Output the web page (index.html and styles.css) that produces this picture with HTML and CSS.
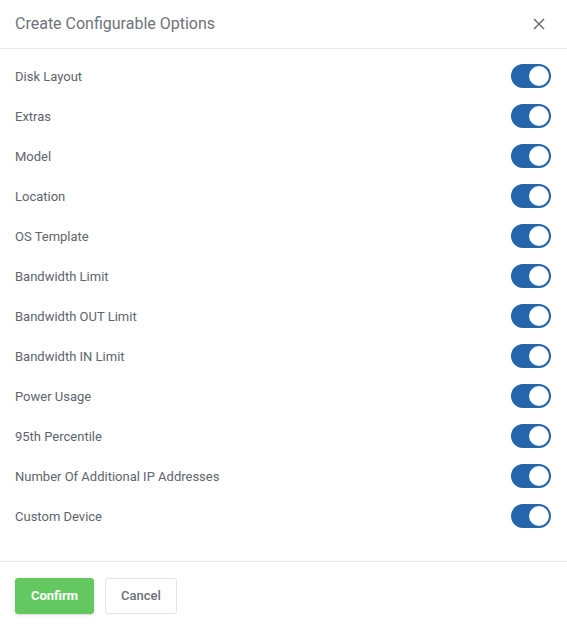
FILE: index.html
```html
<!DOCTYPE html>
<html>
<head>
<meta charset="utf-8">
<link rel="stylesheet" href="styles.css">
</head>
<body>
<div class="modal">
  <div class="modal-header">
    <h2 class="modal-title">Create Configurable Options</h2>
    <button class="close" aria-label="Close">
      <svg width="12" height="12" viewBox="0 0 12 12"><path d="M1 1L11 11M11 1L1 11" stroke="#6f737c" stroke-width="1.6" fill="none"/></svg>
    </button>
  </div>
  <div class="modal-body">
    <div class="row"><span class="label">Disk Layout</span><span class="toggle"><span class="knob"></span></span></div>
    <div class="row"><span class="label">Extras</span><span class="toggle"><span class="knob"></span></span></div>
    <div class="row"><span class="label">Model</span><span class="toggle"><span class="knob"></span></span></div>
    <div class="row"><span class="label">Location</span><span class="toggle"><span class="knob"></span></span></div>
    <div class="row"><span class="label">OS Template</span><span class="toggle"><span class="knob"></span></span></div>
    <div class="row"><span class="label">Bandwidth Limit</span><span class="toggle"><span class="knob"></span></span></div>
    <div class="row"><span class="label">Bandwidth OUT Limit</span><span class="toggle"><span class="knob"></span></span></div>
    <div class="row"><span class="label">Bandwidth IN Limit</span><span class="toggle"><span class="knob"></span></span></div>
    <div class="row"><span class="label">Power Usage</span><span class="toggle"><span class="knob"></span></span></div>
    <div class="row"><span class="label">95th Percentile</span><span class="toggle"><span class="knob"></span></span></div>
    <div class="row"><span class="label">Number Of Additional IP Addresses</span><span class="toggle"><span class="knob"></span></span></div>
    <div class="row"><span class="label">Custom Device</span><span class="toggle"><span class="knob"></span></span></div>
  </div>
  <div class="modal-footer">
    <button class="btn btn-confirm">Confirm</button>
    <button class="btn btn-cancel">Cancel</button>
  </div>
</div>
</body>
</html>
```
FILE: styles.css
```css
* { box-sizing: border-box; }
html, body { margin: 0; padding: 0; background: #fff; }
body { font-family: Roboto, "Liberation Sans", sans-serif; }
.modal { width: 567px; background: #fff; }
.modal-header {
  height: 49px;
  display: flex;
  align-items: center;
  justify-content: space-between;
  padding: 0 21px 1px 15px;
  border-bottom: 1px solid #e6e7eb;
}
.modal-title {
  margin: 0;
  font-size: 16px;
  font-weight: 400;
  color: #6f737c;
}
.close {
  border: 0;
  background: none;
  padding: 0;
  width: 14px;
  height: 14px;
  display: flex;
  align-items: center;
  justify-content: center;
}
.modal-body { padding: 7px 16px 25px 15px; }
.row {
  height: 40px;
  display: flex;
  align-items: center;
  justify-content: space-between;
}
.label { font-size: 13px; color: #60646d; }
.toggle {
  width: 40px;
  height: 24px;
  border-radius: 12px;
  background: #2465ab;
  display: flex;
  align-items: center;
  justify-content: flex-end;
  padding: 2px;
}
.knob {
  width: 20px;
  height: 20px;
  border-radius: 50%;
  background: #fff;
}
.modal-footer {
  border-top: 1px solid #e6e7eb;
  padding: 16px 15px;
  display: flex;
  gap: 11px;
}
.btn {
  height: 36px;
  border-radius: 3px;
  font-family: Roboto, "Liberation Sans", sans-serif;
  font-size: 13px;
  padding: 0 0 1px;
}
.btn-confirm {
  width: 79px;
  background: #63c85f;
  border: 1px solid #63c85f;
  color: #fff;
  font-weight: 700;
  box-shadow: 0 1px 3px rgba(0,0,0,0.15);
}
.btn-cancel {
  width: 72px;
  background: #fff;
  border: 1px solid #e3e4e8;
  color: #6c7079;
  font-weight: 500;
}
```
